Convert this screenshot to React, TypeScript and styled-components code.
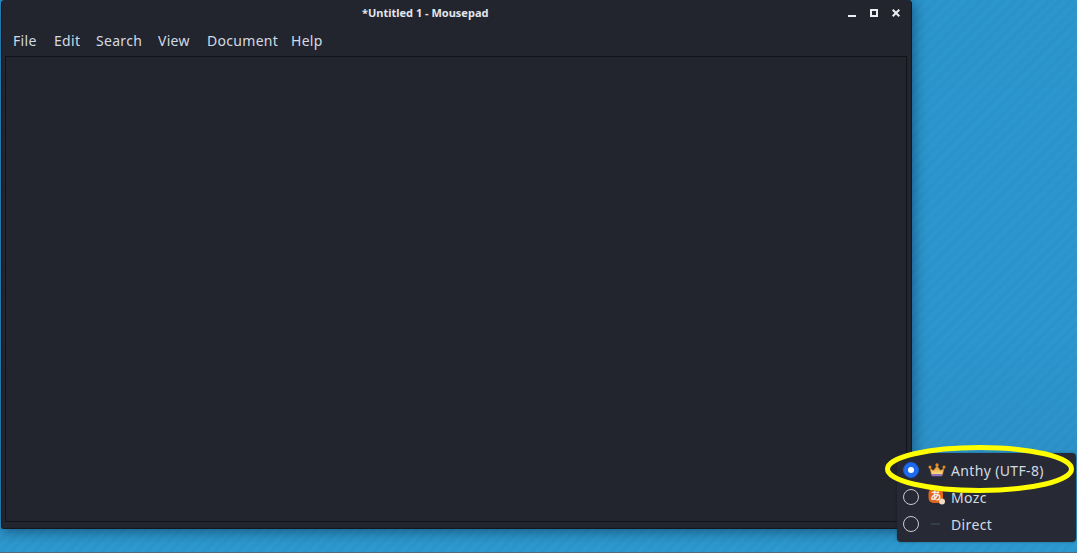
import React from "react";
import styled, { createGlobalStyle } from "styled-components";

const Global = createGlobalStyle`
  html, body { margin: 0; padding: 0; width: 100%; height: 100%; overflow: hidden; background: #2a93c9; }
  #root { width: 100%; height: 100%; }
`;

const Desktop = styled.div`
  position: relative;
  width: 1077px;
  height: 553px;
  overflow: hidden;
  font-family: "Noto Sans", "Open Sans", sans-serif;
  border-bottom: 1px solid #56697a;
  box-sizing: border-box;
  background:
    repeating-linear-gradient(135deg, rgba(255,255,255,0.012) 0 4px, rgba(0,0,0,0.012) 4px 8px),
    linear-gradient(180deg, #2995cc 0%, #2b95cd 60%, #2a90c6 86%, #2c98cd 100%);
`;

const Window = styled.div`
  position: absolute;
  left: 1px;
  top: 0;
  width: 911px;
  height: 529px;
  display: flex;
  flex-direction: column;
  box-sizing: border-box;
  background: #22252e;
  border: 1px solid #14171e;
  border-top: none;
  border-radius: 4px 4px 0 3px;
  box-shadow: 1px 2px 14px rgba(0, 20, 50, 0.5);
`;

const TitleBar = styled.div`
  position: relative;
  height: 26px;
  flex: none;
  display: flex;
  align-items: center;
  padding-left: 360px;
`;

const Title = styled.div`
  font-size: 11px;
  font-weight: 700;
  color: #e3e6ed;
  margin-top: -1px;
`;

const Controls = styled.div`
  position: absolute;
  top: 9px;
  right: 9px;
  display: flex;
  align-items: center;
  gap: 12px;
`;

const Control = styled.svg`
  display: block;
  width: 10px;
  height: 10px;
`;

const MenuBar = styled.div`
  height: 30px;
  flex: none;
  display: flex;
  align-items: center;
  padding: 0 0 0 11px;
`;

const MenuItem = styled.span<{ $w: number }>`
  width: ${(p) => p.$w}px;
  flex: none;
  font-size: 14px;
  letter-spacing: 0.3px;
  color: #d3dae3;
  line-height: 30px;
`;

const Editor = styled.div`
  flex: 1;
  margin: 0 4px 6px 3px;
  background: #22252e;
  border: 1px solid #11131a;
`;

const Popup = styled.div`
  position: absolute;
  left: 897px;
  top: 453px;
  width: 179px;
  height: 89px;
  box-sizing: border-box;
  padding: 3px 0 4px 6px;
  display: flex;
  flex-direction: column;
  background: #272a34;
  border-radius: 4px;
  box-shadow: 0 0 3px rgba(0, 0, 0, 0.3);
`;

const Row = styled.div`
  height: 27px;
  display: flex;
  align-items: center;
`;

const Radio = styled.span<{ $on?: boolean }>`
  width: 16px;
  height: 16px;
  box-sizing: border-box;
  flex: none;
  border-radius: 50%;
  display: flex;
  align-items: center;
  justify-content: center;
  border: ${(p) => (p.$on ? "1px solid #1a5cd8" : "1.5px solid #c6cad2")};
  background: ${(p) => (p.$on ? "#1f6bf0" : "transparent")};
  &::after {
    content: "";
    display: ${(p) => (p.$on ? "block" : "none")};
    width: 6px;
    height: 6px;
    border-radius: 50%;
    background: #fff;
  }
`;

const IconSlot = styled.span`
  width: 18px;
  height: 18px;
  flex: none;
  margin-left: 9px;
  margin-right: 5px;
  display: flex;
  align-items: center;
  justify-content: center;
`;

const Label = styled.span`
  font-size: 14px;
  letter-spacing: 0.35px;
  color: #d3dae3;
  white-space: nowrap;
  position: relative;
  top: 1px;
`;

const Annotation = styled.svg`
  position: absolute;
  left: 880px;
  top: 440px;
  width: 197px;
  height: 60px;
  pointer-events: none;
`;

const Crown = () => (
  <svg width="18" height="16" viewBox="0 0 18 16">
    <defs>
      <linearGradient id="crown" x1="0" y1="0" x2="0" y2="1">
        <stop offset="0" stopColor="#e8902a" />
        <stop offset="1" stopColor="#fbe08a" />
      </linearGradient>
    </defs>
    <path d="M2 6 C4 8 5 8.5 6 8 L9 4 L12 8 C13 8.5 14 8 16 6 L14.5 12.5 H3.5 Z" fill="url(#crown)" stroke="#d98a28" strokeWidth="0.6" />
    <rect x="3.5" y="12" width="11" height="2.2" rx="1" fill="#9270b8" />
    <circle cx="9" cy="3" r="1.7" fill="#e88a20" />
    <circle cx="2" cy="5" r="1.5" fill="#e88a20" />
    <circle cx="16" cy="5" r="1.5" fill="#e88a20" />
  </svg>
);

const Mozc = () => (
  <svg width="18" height="18" viewBox="0 0 18 18">
    <rect x="0.5" y="0.5" width="14.5" height="14.5" rx="5" fill="#e2651b" />
    <text x="7.7" y="12" textAnchor="middle" fontSize="11" fontWeight="700" fill="#fbeee0" fontFamily="'Noto Sans CJK JP', sans-serif">あ</text>
    <circle cx="14" cy="13.5" r="3" fill="#f1dcc6" />
  </svg>
);

const Dash = () => (
  <svg width="18" height="4" viewBox="0 0 18 4">
    <rect x="3" y="1" width="9" height="2" fill="#343f48" />
  </svg>
);

const menus: [string, number][] = [
  ["File", 41],
  ["Edit", 42],
  ["Search", 62],
  ["View", 49],
  ["Document", 84],
  ["Help", 40],
];

export default function App() {
  return (
    <Desktop>
      <Global />
      <Window>
        <TitleBar>
          <Title>*Untitled 1 - Mousepad</Title>
          <Controls>
            <Control viewBox="0 0 10 10">
              <rect x="0" y="6" width="8" height="2" fill="#eceef2" />
            </Control>
            <Control viewBox="0 0 10 10">
              <rect x="1" y="1" width="6" height="6" fill="none" stroke="#eceef2" strokeWidth="2" />
            </Control>
            <Control viewBox="0 0 10 10">
              <path d="M0.7 0.7 L7.3 7.3 M7.3 0.7 L0.7 7.3" stroke="#eceef2" strokeWidth="2" />
            </Control>
          </Controls>
        </TitleBar>
        <MenuBar>
          {menus.map(([m, w]) => (
            <MenuItem key={m} $w={w}>{m}</MenuItem>
          ))}
        </MenuBar>
        <Editor />
      </Window>
      <Popup>
        <Row>
          <Radio $on />
          <IconSlot><Crown /></IconSlot>
          <Label>Anthy (UTF-8)</Label>
        </Row>
        <Row>
          <Radio />
          <IconSlot><Mozc /></IconSlot>
          <Label>Mozc</Label>
        </Row>
        <Row>
          <Radio />
          <IconSlot><Dash /></IconSlot>
          <Label>Direct</Label>
        </Row>
      </Popup>
      <Annotation viewBox="0 0 197 60">
        <ellipse cx="99.5" cy="29" rx="92" ry="21.5" fill="none" stroke="#ffff00" strokeWidth="5" />
      </Annotation>
    </Desktop>
  );
}
